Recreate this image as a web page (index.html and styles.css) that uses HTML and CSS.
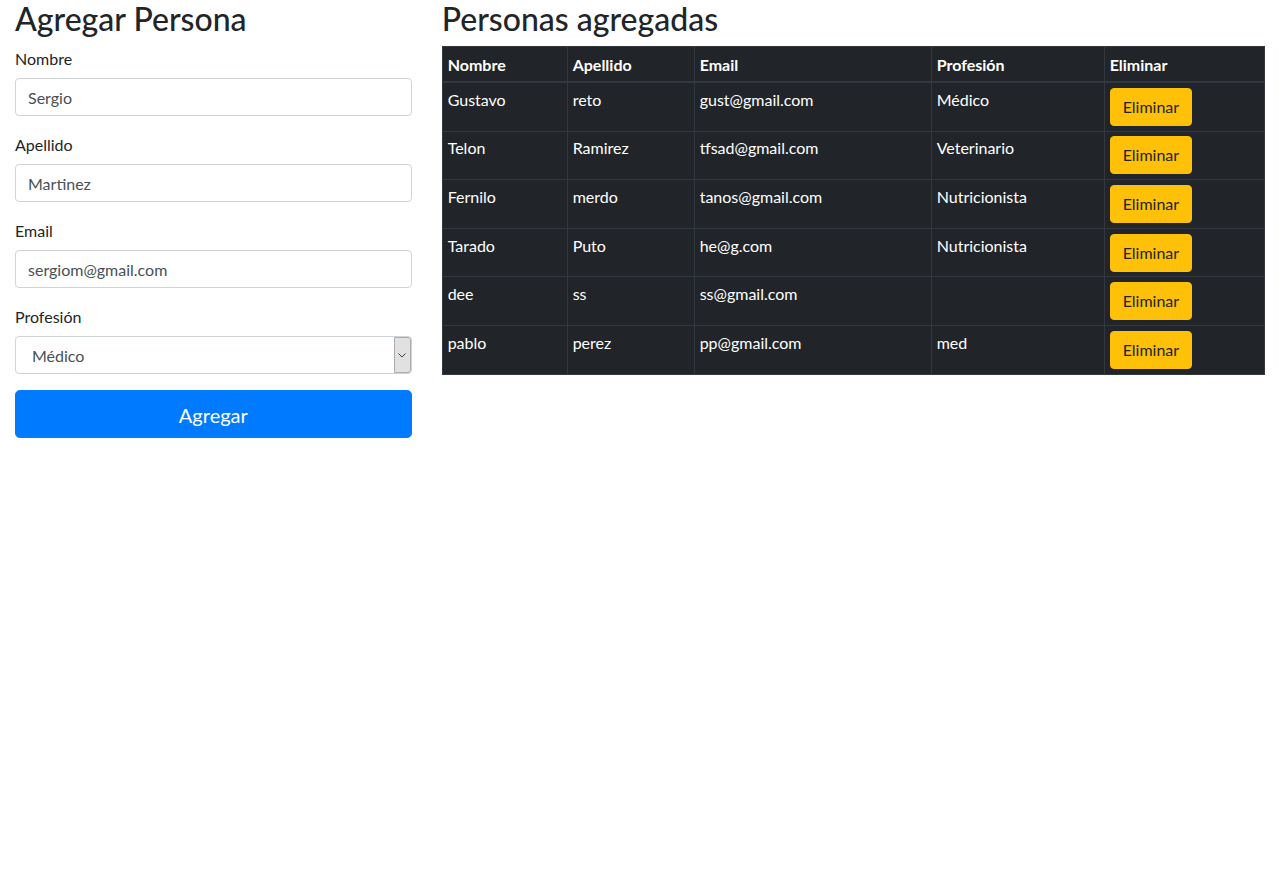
FILE: index.html
```html
<!DOCTYPE html>
<html lang="es">
<head>
<meta charset="utf-8">
<title>Personas</title>
<link rel="stylesheet" href="styles.css">
</head>
<body>
<div class="container">
  <div class="col-form">
    <h2 class="title">Agregar Persona</h2>
    <form class="form">
      <div class="form-group">
        <label class="label">Nombre</label>
        <input class="input" type="text" value="Sergio">
      </div>
      <div class="form-group">
        <label class="label">Apellido</label>
        <input class="input" type="text" value="Martinez">
      </div>
      <div class="form-group">
        <label class="label">Email</label>
        <input class="input" type="text" value="sergiom@gmail.com">
      </div>
      <div class="form-group">
        <label class="label">Profesión</label>
        <div class="select-wrap">
          <select class="input select">
            <option>Médico</option>
            <option>Veterinario</option>
            <option>Nutricionista</option>
          </select>
          <span class="select-arrow">
            <svg width="8" height="5" viewBox="0 0 8 5"><path d="M0.5 0.5 L4 4 L7.5 0.5" fill="none" stroke="#444" stroke-width="1"/></svg>
          </span>
        </div>
      </div>
      <button type="button" class="btn-primary">Agregar</button>
    </form>
  </div>
  <div class="col-table">
    <h2 class="title">Personas agregadas</h2>
    <table class="table">
      <thead>
        <tr>
          <th class="c1">Nombre</th>
          <th class="c2">Apellido</th>
          <th class="c3">Email</th>
          <th class="c4">Profesión</th>
          <th class="c5">Eliminar</th>
        </tr>
      </thead>
      <tbody>
        <tr><td>Gustavo</td><td>reto</td><td>gust@gmail.com</td><td>Médico</td><td><button type="button" class="btn-warning">Eliminar</button></td></tr>
        <tr><td>Telon</td><td>Ramirez</td><td>tfsad@gmail.com</td><td>Veterinario</td><td><button type="button" class="btn-warning">Eliminar</button></td></tr>
        <tr><td>Fernilo</td><td>merdo</td><td>tanos@gmail.com</td><td>Nutricionista</td><td><button type="button" class="btn-warning">Eliminar</button></td></tr>
        <tr><td>Tarado</td><td>Puto</td><td>he@g.com</td><td>Nutricionista</td><td><button type="button" class="btn-warning">Eliminar</button></td></tr>
        <tr><td>dee</td><td>ss</td><td>ss@gmail.com</td><td></td><td><button type="button" class="btn-warning">Eliminar</button></td></tr>
        <tr><td>pablo</td><td>perez</td><td>pp@gmail.com</td><td>med</td><td><button type="button" class="btn-warning">Eliminar</button></td></tr>
      </tbody>
    </table>
  </div>
</div>
</body>
</html>
```
FILE: styles.css
```css
* { box-sizing: border-box; }
html, body { margin: 0; padding: 0; }
body {
  font-family: "Segoe UI", Lato, "Liberation Sans", sans-serif;
  font-size: 16px;
  line-height: 1.5;
  color: #212529;
  background: #fff;
}
.container {
  display: grid;
  grid-template-columns: 1fr 2fr;
}
.col-form, .col-table {
  min-width: 0;
  padding: 0 15px;
}
.title {
  margin: 0 0 8px 0;
  font-size: 32px;
  font-weight: 500;
  line-height: 1.2;
}
.form { margin: 0; }
.form-group { margin-bottom: 16px; }
.label {
  display: inline-block;
  margin-bottom: 8px;
  padding-top: 1px;
  height: 24px;
}
.input {
  display: block;
  width: 100%;
  height: 38px;
  padding: 6px 12px;
  font-family: inherit;
  font-size: 16px;
  line-height: 1.5;
  color: #495057;
  background: #fff;
  border: 1px solid #ced4da;
  border-radius: 4px;
  margin: 0;
}
.select-wrap { position: relative; }
.select {
  appearance: none;
  -webkit-appearance: none;
  padding: 7px 12px 5px 16px;
}
.select-arrow {
  position: absolute;
  top: 1px;
  right: 1px;
  width: 17px;
  height: 36px;
  background: #e1e1e1;
  border: 1px solid #adadad;
  border-radius: 0 3px 3px 0;
  display: flex;
  align-items: center;
  justify-content: center;
}
.btn-primary {
  display: block;
  width: 100%;
  height: 48px;
  padding: 9px 16px 7px;
  font-family: inherit;
  font-size: 20px;
  line-height: 1.5;
  color: #fff;
  background: #007bff;
  border: 1px solid #007bff;
  border-radius: 4.8px;
}
.table {
  width: 100%;
  border-collapse: collapse;
  table-layout: fixed;
  background: #212529;
  color: #fff;
}
.table th, .table td {
  padding: 4.8px 5px;
  border: 1px solid #32383e;
  text-align: left;
  vertical-align: top;
}
.table th {
  font-weight: 700;
  border-bottom-width: 2px;
  padding-top: 5.8px;
  padding-bottom: 3.8px;
}
.c1 { width: 125px; }
.c2 { width: 127px; }
.c3 { width: 237px; }
.c4 { width: 173px; }
.c5 { width: auto; }
.btn-warning {
  display: inline-block;
  height: 38px;
  padding: 6px 12px;
  font-family: inherit;
  font-size: 16px;
  line-height: 1.5;
  color: #212529;
  background: #ffc107;
  border: 1px solid #ffc107;
  border-radius: 4px;
}
```
